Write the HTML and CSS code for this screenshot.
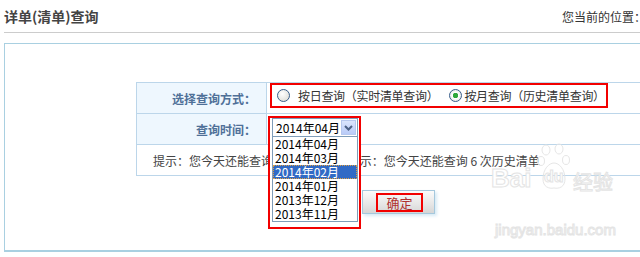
FILE: index.html
```html
<!DOCTYPE html>
<html lang="zh-CN">
    <head>
        <meta charset="UTF-8" />
        <title>详单(清单)查询</title>
        <link rel="stylesheet" href="styles.css">
    </head>
    <body>
        <div class="header">
            <h1 class="title">详单(清单)查询</h1>
            <div class="location">您当前的位置：</div>
        </div>
        <div class="panel">
            <table class="queryTable">
                <tr>
                    <th>选择查询方式：</th>
                    <td>
                        <div class="mark radios">
                            <span class="radio"></span>
                            <span class="radioText">按日查询（实时清单查询）</span>
                            <span class="radio checked"></span>
                            <span class="radioText">按月查询（历史清单查询）</span>
                        </div>
                    </td>
                </tr>
                <tr>
                    <th>查询时间：</th>
                    <td class="timeCell">
                        <div class="mark dropdown">
                            <div class="select">
                                <span>2014年04月</span>
                                <span class="arrow">
                                    <svg width="9" height="6" viewBox="0 0 9 6"><path d="M1 1 L4.5 4.5 L8 1" fill="none" stroke="#4d6185" stroke-width="2"/></svg>
                                </span>
                            </div>
                            <ul class="options">
                                <li>2014年04月</li>
                                <li>2014年03月</li>
                                <li class="active">2014年02月</li>
                                <li>2014年01月</li>
                                <li>2013年12月</li>
                                <li>2013年11月</li>
                            </ul>
                        </div>
                    </td>
                </tr>
                <tr>
                    <td colspan="2" class="tip">提示：您今天还能查询 6 次实时清单 提示：您今天还能查询 6 次历史清单</td>
                </tr>
            </table>
            <div class="actions">
                <button class="btn"><span class="mark btnText">确定</span></button>
            </div>
            <div class="watermark">
                <span class="wmBai">Bai</span>
                <svg class="wmPaw" width="34" height="52" viewBox="0 0 34 52">
                    <ellipse cx="9" cy="7" rx="4" ry="5" fill="none" stroke="#e6e6e6"/>
                    <ellipse cx="22" cy="6" rx="4" ry="5" fill="none" stroke="#e6e6e6"/>
                    <ellipse cx="4" cy="18" rx="3.5" ry="4.5" fill="none" stroke="#e6e6e6"/>
                    <ellipse cx="29" cy="17" rx="3.5" ry="4.5" fill="none" stroke="#e6e6e6"/>
                    <path d="M6 36 C6 26 12 20 17 20 C22 20 28 26 28 36 C28 44 22 46 17 45 C12 46 6 44 6 36 Z" fill="none" stroke="#e6e6e6"/>
                </svg>
                <span class="wmDu">du</span>
                <span class="wmJy">经验</span>
                <div class="wmUrl">jingyan.baidu.com</div>
            </div>
        </div>
    </body>
</html>
```

FILE: styles.css
```css
body {
    margin: 0;
    width: 640px;
    height: 257px;
    overflow: hidden;
    background-color: #fff;
    color: #333;
    font-family: "Noto Sans CJK SC", "Liberation Sans", sans-serif;
    font-size: 12px;
}
.header {
    display: flex;
    justify-content: space-between;
    align-items: center;
    height: 32px;
    margin-left: 4px;
    border-bottom: 1px solid #cccccc;
}
.title {
    margin: 0;
    font-size: 14px;
    font-weight: bold;
    color: #444;
}
.location {
    flex-shrink: 0;
    margin-right: -6px;
    color: #333;
    white-space: nowrap;
}
.panel {
    position: relative;
    width: 680px;
    height: 206px;
    margin: 10px 0 0 4px;
    border: 1px solid #a9d0e1;
    border-bottom-width: 2px;
}
.queryTable {
    width: 540px;
    margin: 38px 0 0 131px;
    border-collapse: collapse;
}
.queryTable th,
.queryTable td {
    height: 31px;
    padding: 0;
    border: 1px solid #bcd6ea;
    box-sizing: border-box;
}
.queryTable th {
    width: 130px;
    padding-right: 10px;
    text-align: right;
    background-color: #eef7fe;
    color: #4f7098;
    font-weight: bold;
}
.queryTable td {
    vertical-align: top;
}
.mark {
    border: 2px solid #f20000;
}
.radios {
    display: inline-flex;
    align-items: center;
    height: 21px;
    margin: 0 0 0 3px;
    padding: 0 1px 0 5px;
}
.radio {
    width: 11px;
    height: 11px;
    border: 1px solid #3a5f8c;
    border-radius: 50%;
    background: radial-gradient(circle at 40% 35%, #ffffff, #d8d8d0);
}
.radio.checked {
    margin-left: 11px;
    background: radial-gradient(circle, #2fa83a 0 2.5px, #ffffff 3px, #d8d8d0);
}
.radioText {
    margin-left: 8px;
    letter-spacing: -0.3px;
}
.radio.checked + .radioText {
    margin-left: 2px;
}
.timeCell {
    position: relative;
}
.dropdown {
    position: absolute;
    left: 1px;
    top: 2px;
    width: 86px;
    padding: 0 1px 5px 2px;
    background-color: #fff;
    z-index: 2;
}
.select {
    display: flex;
    justify-content: space-between;
    align-items: center;
    height: 19px;
    border: 1px solid #7f9db9;
    box-sizing: border-box;
    padding: 0 1px 0 3px;
    color: #000;
}
.arrow {
    display: flex;
    align-items: center;
    justify-content: center;
    width: 15px;
    height: 15px;
    box-sizing: border-box;
    border: 1px solid #b7c8ee;
    background: linear-gradient(#dbe5fd, #b9cbf8);
}
.options {
    margin: -1px 0 0 0;
    padding: 0;
    list-style: none;
    border: 1px solid #7f9db9;
    color: #000;
}
.options li {
    height: 14px;
    line-height: 14px;
    padding-left: 2px;
}
.options li.active {
    background-color: #316ac5;
    color: #fff;
    outline: 1px dotted #e0a040;
    outline-offset: -1px;
}
.tip {
    padding-left: 16px !important;
    vertical-align: middle !important;
    color: #444;
    white-space: nowrap;
}
.actions {
    margin: 14px 0 0 357px;
}
.btn {
    display: flex;
    align-items: center;
    justify-content: center;
    width: 73px;
    height: 24px;
    padding: 0;
    border: 1px solid #a5c8dd;
    background: linear-gradient(#fbfbfb, #e6e6e6 60%, #d6d6d6);
    box-shadow: 2px 2px 3px #d7eaf5;
    font: inherit;
}
.btnText {
    display: block;
    width: 43px;
    height: 15px;
    margin-left: 2px;
    line-height: 15px;
    font-size: 13px;
    color: #b03030;
}
.watermark {
    position: absolute;
    left: 486px;
    top: 99px;
    width: 130px;
    height: 100px;
    color: #fff;
    -webkit-text-stroke: 1px #e4e4e4;
    font-family: "Liberation Sans", sans-serif;
}
.wmBai {
    position: absolute;
    left: 0;
    top: 20px;
    font-size: 26px;
    font-weight: bold;
}
.wmPaw {
    position: absolute;
    left: 46px;
    top: 0;
}
.wmDu {
    position: absolute;
    left: 53px;
    top: 25px;
    font-size: 16px;
    font-weight: bold;
}
.wmJy {
    position: absolute;
    left: 82px;
    top: 24px;
    font-size: 20px;
    font-family: "Noto Sans CJK SC", sans-serif;
}
.wmUrl {
    position: absolute;
    left: 4px;
    top: 78px;
    font-size: 15px;
}
```
